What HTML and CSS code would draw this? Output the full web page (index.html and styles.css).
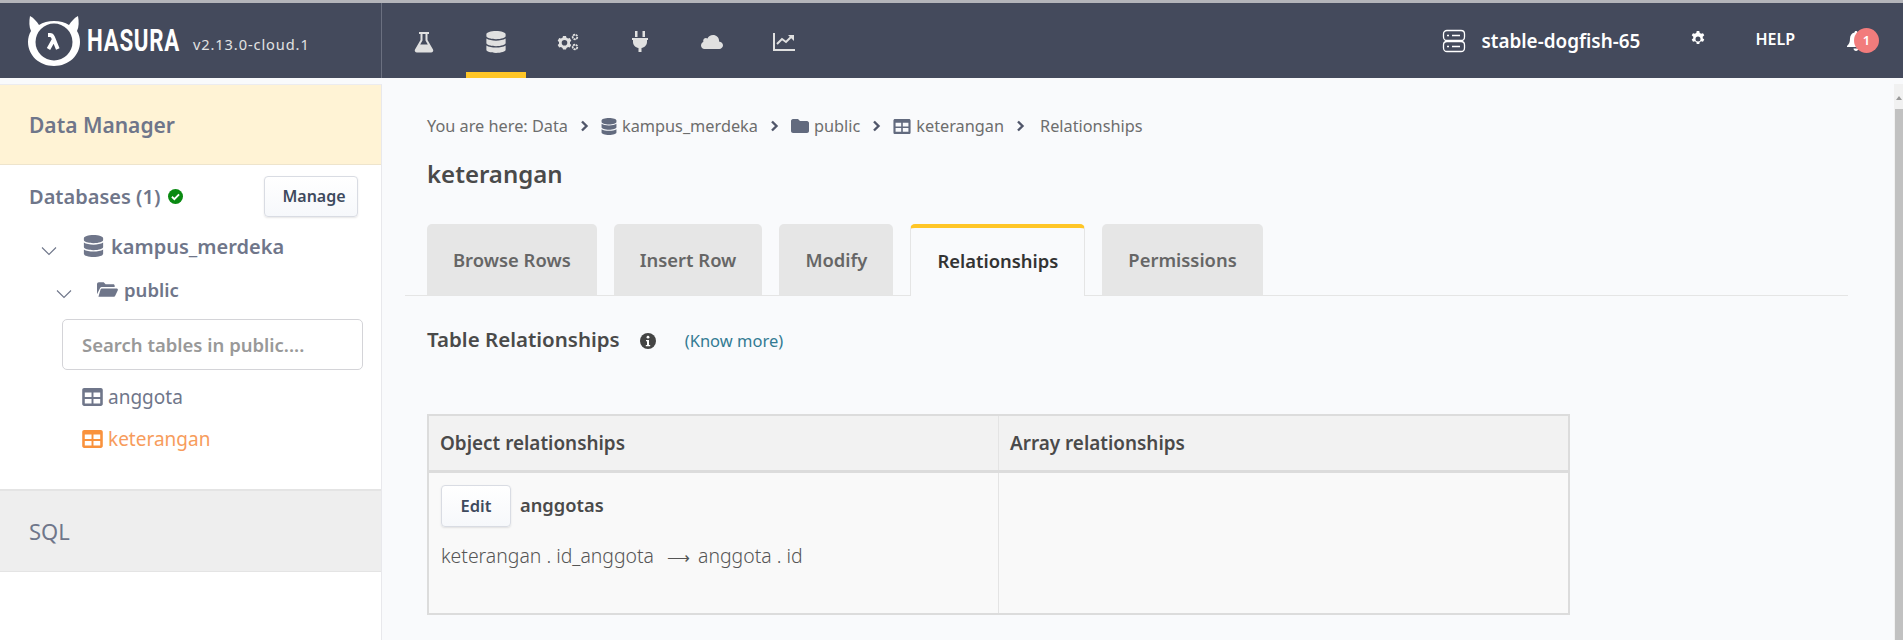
FILE: index.html
```html
<!DOCTYPE html>
<html lang="en">
<head>
    <meta charset="UTF-8">
    <meta name="viewport" content="width=device-width, initial-scale=1.0">
    <title>Hasura Console</title>
    <link rel="stylesheet" href="styles.css">
</head>
<body>
    <svg class="defs" width="0" height="0">
        <symbol id="i-db" viewBox="0 0 448 512"><path d="M448 73v46c0 40-100 73-224 73S0 159 0 119V73C0 33 100 0 224 0s224 33 224 73zm0 103v103c0 40-100 73-224 73S0 319 0 279V176c48 33 136 49 224 49s176-16 224-49zm0 160v103c0 40-100 73-224 73S0 479 0 439V336c48 33 136 49 224 49s176-16 224-49z"/></symbol>
        <symbol id="i-table" viewBox="0 0 512 448"><path fill-rule="evenodd" d="M48 0h416c27 0 48 21 48 48v352c0 27-21 48-48 48H48c-27 0-48-21-48-48V48C0 21 21 0 48 0zm16 112v112h168V112H64zm216 0v112h168V112H280zM64 272v112h168V272H64zm216 0v112h168V272H280z"/></symbol>
        <symbol id="i-chev" viewBox="0 0 10 12"><path d="M2 1.500 6.500 6 2 10.500" fill="none" stroke="currentColor" stroke-width="2.400"/></symbol>
        <symbol id="i-down" viewBox="0 0 16 10"><path d="M1 1.500 8 8.500l7-7" fill="none" stroke="currentColor" stroke-width="1.100"/></symbol>
    </svg>

    <header class="topbar">
        <div class="brand">
            <svg class="brand-logo" viewBox="0 0 52 52" width="52" height="52">
                <path d="M2 1c4 2 7 6 9 9 4-2.500 9-4 15-4s11 1.500 15 4c2-3 5-7 9-9 1 5 1 11-1 15 2 3 3 7 3 11 0 13-11 24-26 24S0 40 0 27c0-4 1-8 3-11C1 12 1 6 2 1z" fill="#fff"/>
                <circle cx="26" cy="27" r="18.500" fill="#444a5c"/>
                <path d="M20 20h2c1.500 0 2.300.7 3 2.300L29.800 34M25.500 25 20.500 34" fill="none" stroke="#fff" stroke-width="3.800"/>
            </svg>
            <span class="brand-name">HASURA</span>
            <span class="brand-version">v2.13.0-cloud.1</span>
        </div>
        <nav class="main-nav">
            <a class="nav-item">
                <svg viewBox="0 0 20 22" width="20" height="22"><path d="M5 1h10v2h-1.500v6l5.500 9.500c.8 1.500-.2 3-2 3H3c-1.800 0-2.800-1.500-2-3L6.500 9V3H5zm3.500 2v6.500L6.200 13.500h7.600L11.500 9.500V3z" fill-rule="evenodd"/></svg>
            </a>
            <a class="nav-item active">
                <svg width="20" height="22"><use href="#i-db"/></svg>
            </a>
            <a class="nav-item">
                <svg viewBox="0 0 22 20" width="22" height="20"><path fill-rule="evenodd" d="M6 4h3l.500 1.700 1.600.9 1.700-.5 1.500 2.600-1.300 1.200v1.800l1.300 1.200-1.500 2.600-1.700-.5-1.600.9L9 17.600H6l-.5-1.700-1.600-.9-1.700.5L.7 12.900 2 11.700V9.900L.7 8.700l1.500-2.600 1.700.5 1.600-.9zm1.500 4a2.800 2.800 0 1 0 0 5.600 2.800 2.800 0 0 0 0-5.600z"/><circle cx="18" cy="5" r="2.300" fill="none" stroke="currentColor" stroke-width="1.800" stroke-dasharray="2 .6"/><circle cx="18" cy="15" r="2.300" fill="none" stroke="currentColor" stroke-width="1.800" stroke-dasharray="2 .6"/></svg>
            </a>
            <a class="nav-item">
                <svg viewBox="0 0 16 22" width="16" height="22"><path d="M3 0h2.500v6H3zm7.500 0H13v6h-2.500zM0 7h16v2h-1v2c0 3-2.500 5.500-5.500 6v4h-3v-4C3.500 16.500 1 14 1 11V9H0z"/></svg>
            </a>
            <a class="nav-item">
                <svg viewBox="0 0 22 16" width="22" height="16"><path d="M18 7.500c0-.2.100-.4.100-.6C18.100 3.600 15.400 1 12 1 9.500 1 7.400 2.400 6.500 4.500 6 4.200 5.500 4 4.900 4 3.400 4 2.200 5.200 2.200 6.700c0 .4.100.8.200 1.100C1 8.500 0 10 0 11.600 0 13.500 1.600 15 3.500 15h14.800c2 0 3.700-1.700 3.700-3.700 0-1.800-1.700-3.400-4-3.800z"/></svg>
            </a>
            <a class="nav-item">
                <svg viewBox="0 0 22 18" width="22" height="18"><path d="M0 0h2v16h20v2H0z"/><path d="m4 11 5-5 4 3 5-5" fill="none" stroke="currentColor" stroke-width="2"/><path d="M15 2h6v6z"/></svg>
            </a>
        </nav>
        <div class="top-right">
            <div class="project">
                <svg class="server-icon" viewBox="0 0 24 24" width="24" height="24"><path d="M5 1.500h14c2 0 3.500 1.500 3.500 3.500v3c0 2-1.500 3.500-3.500 3.500H5C3 11.500 1.500 10 1.500 8V5c0-2 1.500-3.500 3.500-3.500zM5 12.500h14c2 0 3.500 1.500 3.500 3.500v3c0 2-1.500 3.500-3.500 3.500H5c-2 0-3.500-1.500-3.500-3.500v-3c0-2 1.500-3.500 3.500-3.500zM5 6.500h2M10 6.500h8"/><path d="M5 17.500h2M10 17.500h8"/></svg>
                <span>stable-dogfish-65</span>
            </div>
            <svg class="settings" viewBox="0 0 512 512" width="16" height="16"><path fill-rule="evenodd" d="M215 0h82l14 66c15 5 29 13 41 23l64-21 41 71-50 45c3 15 3 31 0 46l50 45-41 71-64-21c-12 10-26 18-41 23l-14 66h-82l-14-66c-15-5-29-13-41-23l-64 21-41-71 50-45c-3-15-3-31 0-46l-50-45 41-71 64 21c12-10 26-18 41-23zm41 176a80 80 0 1 0 0 160 80 80 0 0 0 0-160z"/></svg>
            <span class="help">HELP</span>
            <div class="bell">
                <svg viewBox="0 0 18 20" width="18" height="20"><path d="M9 0c1 0 1.500.7 1.500 1.500 3 .7 4.500 3.200 4.500 6 0 4 1 5.500 3 7.500v1H0v-1c2-2 3-3.500 3-7.500 0-2.800 1.500-5.300 4.500-6C7.500.7 8 0 9 0zM6.500 17.500h5C11.500 19 10.300 20 9 20s-2.500-1-2.500-2.500z"/></svg>
                <span class="bell-badge">1</span>
            </div>
        </div>
    </header>

    <div class="layout">
        <aside class="sidebar">
            <div class="side-title">Data Manager</div>
            <div class="side-body">
                <div class="db-head">
                    <span class="db-label">Databases (1)</span>
                    <svg class="ok-icon" viewBox="0 0 16 16" width="15" height="15"><circle cx="8" cy="8" r="8" fill="#0a8a12"/><path d="m4.200 8.300 2.600 2.500 5-5" fill="none" stroke="#fff" stroke-width="2"/></svg>
                    <button class="btn btn-manage">Manage</button>
                </div>
                <div class="tree-db">
                    <svg class="down" width="16" height="10"><use href="#i-down"/></svg>
                    <svg class="tree-db-icon" width="21" height="22"><use href="#i-db"/></svg>
                    <span>kampus_merdeka</span>
                </div>
                <div class="tree-schema">
                    <svg class="down" width="16" height="10"><use href="#i-down"/></svg>
                    <svg class="tree-folder" viewBox="0 0 22 15" width="21" height="15"><path d="M0 2c0-1 .8-2 2-2h5l2 2h8c1 0 1.500.7 1.500 1.500V5H5.500C4.500 5 3.500 5.500 3 6.500L0 12.500z"/><path d="M5 6.500h15.500c1 0 1.700 1 1.300 1.800l-2.600 5.400c-.3.800-1 1.300-1.900 1.300H1.500L3.800 7.300c.2-.5.700-.8 1.200-.8z"/></svg>
                    <span>public</span>
                </div>
                <input class="table-search" type="text" placeholder="Search tables in public....">
                <ul class="table-list">
                    <li><svg width="21" height="18"><use href="#i-table"/></svg>anggota</li>
                    <li class="current"><svg width="21" height="18"><use href="#i-table"/></svg>keterangan</li>
                </ul>
            </div>
            <div class="side-sql">SQL</div>
        </aside>

        <main class="content">
            <div class="crumbs">
                <span>You are here: Data</span>
                <svg class="sep" width="10" height="12"><use href="#i-chev"/></svg>
                <svg class="crumb-icon" width="16" height="17"><use href="#i-db"/></svg>
                <span>kampus_merdeka</span>
                <svg class="sep" width="10" height="12"><use href="#i-chev"/></svg>
                <svg class="crumb-icon" viewBox="0 0 18 14" width="18" height="14"><path d="M0 2c0-1 .8-2 2-2h5l2 2h7c1 0 2 1 2 2v8c0 1-1 2-2 2H2c-1 0-2-1-2-2z"/></svg>
                <span>public</span>
                <svg class="sep" width="10" height="12"><use href="#i-chev"/></svg>
                <svg class="crumb-icon" width="18" height="15"><use href="#i-table"/></svg>
                <span>keterangan</span>
                <svg class="sep sep-last" width="10" height="12"><use href="#i-chev"/></svg>
                <span>Relationships</span>
            </div>
            <h2 class="page-title">keterangan</h2>
            <div class="tabs">
                <a class="tab">Browse Rows</a>
                <a class="tab">Insert Row</a>
                <a class="tab">Modify</a>
                <a class="tab active">Relationships</a>
                <a class="tab">Permissions</a>
            </div>
            <div class="section-head">
                <h3>Table Relationships</h3>
                <svg class="info" viewBox="0 0 16 16" width="16" height="16"><circle cx="8" cy="8" r="8" fill="#444"/><circle cx="8" cy="4.200" r="1.400" fill="#fff"/><path d="M6 7h3v5h1.200v1.300H5.800V12H7V8.300H6z" fill="#fff"/></svg>
                <a class="know-more">(Know more)</a>
            </div>
            <table class="rel-table">
                <thead>
                    <tr><th>Object relationships</th><th>Array relationships</th></tr>
                </thead>
                <tbody>
                    <tr>
                        <td>
                            <div class="rel-name"><button class="btn btn-edit">Edit</button><b>anggotas</b></div>
                            <div class="rel-map">keterangan . id_anggota<span class="rel-arrow">⟶</span>anggota . id</div>
                        </td>
                        <td></td>
                    </tr>
                </tbody>
            </table>
        </main>

        <div class="scrollbar"><span class="scroll-up"></span><span class="scroll-thumb"></span></div>
    </div>
</body>
</html>
```

FILE: styles.css
```css
/* General Styles */
* {
    box-sizing: border-box;
}

html, body {
    height: 100%;
}

body {
    margin: 0;
    overflow: hidden;
    background-color: #f9fafc;
    color: #4a4a4a;
    font-family: "Noto Sans", "Open Sans", sans-serif;
    font-size: 16px;
}

.defs {
    position: absolute;
}

svg {
    fill: currentColor;
    flex: none;
}

/* Top bar */
.topbar {
    display: flex;
    height: 78px;
    background-color: #444a5c;
    border-top: 3px solid #b4b5ba;
    color: #e0e0e0;
}

.brand {
    display: flex;
    align-items: center;
    width: 382px;
    padding: 0 0 0 28px;
    border-right: 1px solid #6b7080;
}

.brand-logo {
    margin-top: 1px;
}

.brand-name {
    width: 93px;
    margin-left: 7px;
    color: #fff;
    font-family: "Roboto", sans-serif;
    font-size: 31px;
    font-weight: 700;
    letter-spacing: 1px;
    transform: scaleX(.72);
    transform-origin: left;
}

.brand-version {
    margin: 6px 0 0 13px;
    color: #e2e2e2;
    font-size: 14.600px;
    letter-spacing: .9px;
    white-space: nowrap;
}

.main-nav {
    display: flex;
    gap: 12px;
    margin-left: 12px;
}

.nav-item {
    display: flex;
    align-items: center;
    justify-content: center;
    width: 60px;
    height: 75px;
    padding-top: 9px;
    border-bottom: 6px solid transparent;
}

.nav-item.active {
    border-bottom-color: #ffc627;
}

.top-right {
    display: flex;
    align-items: center;
    margin-left: auto;
    color: #fff;
}

.project {
    display: flex;
    align-items: center;
    gap: 15px;
    font-size: 18.900px;
    font-weight: 600;
}

.server-icon {
    fill: none;
    stroke: currentColor;
    stroke-width: 1.300;
}

.settings {
    margin-left: 50px;
    margin-top: -3px;
}

.help {
    margin-left: 49px;
    margin-top: -4px;
    font-size: 16px;
    font-weight: 600;
}

.bell {
    position: relative;
    width: 54px;
    height: 20px;
    margin-left: 52px;
    margin-right: 2px;
}

.bell-badge {
    position: absolute;
    top: -3px;
    left: 7px;
    width: 25px;
    height: 25px;
    border-radius: 50%;
    background-color: #f27c7c;
    color: #fff;
    font-size: 13px;
    font-weight: 600;
    line-height: 25px;
    text-align: center;
}

/* Layout */
.layout {
    display: flex;
    height: 562px;
}

.sidebar {
    display: flex;
    flex-direction: column;
    width: 382px;
    margin-top: 6px;
    background-color: #fff;
    border-top: 1px solid #ececf0;
    border-right: 1px solid #e8e8ec;
    color: #6f768a;
}

.side-title {
    height: 80px;
    padding: 26px 0 0 29px;
    background-color: #fff3d5;
    border-bottom: 1px solid #eee4cc;
    font-size: 21px;
    font-weight: 600;
}

.side-body {
    height: 326px;
    border-bottom: 2px solid #e4e4e4;
}

.db-head {
    display: flex;
    align-items: center;
    height: 52px;
    margin-top: 8px;
    padding-left: 29px;
}

.db-label {
    margin-top: -6px;
    font-size: 20px;
    font-weight: 600;
}

.ok-icon {
    margin-left: 8px;
    margin-top: -6px;
}

.btn {
    border: 1px solid #d9dce3;
    border-radius: 4px;
    background: linear-gradient(#fff, #f6f8fb);
    box-shadow: 0 1px 2px rgba(0, 0, 0, .1);
    color: #3e4a5e;
    font-family: inherit;
    font-size: 16px;
    font-weight: 600;
}

.btn-manage {
    width: 94px;
    height: 41px;
    margin-left: auto;
    margin-right: 23px;
    margin-top: -6px;
    padding: 0 0 0 6px;
}

.tree-db {
    display: flex;
    align-items: center;
    height: 34px;
    margin-top: 4px;
    padding-left: 41px;
    font-size: 20px;
    font-weight: 600;
}

.tree-db .down {
    margin-top: 10px;
}

.tree-db-icon {
    margin-left: 26px;
    margin-right: 7px;
}

.tree-schema {
    display: flex;
    align-items: center;
    height: 30px;
    margin-top: 11px;
    padding-left: 56px;
    font-size: 18.500px;
    font-weight: 600;
}

.tree-schema .down {
    margin-top: 10px;
}

.tree-folder {
    margin-left: 25px;
    margin-right: 6px;
}

.table-search {
    display: block;
    width: 301px;
    height: 51px;
    margin: 15px 0 0 62px;
    padding: 0 19px;
    border: 1px solid #d4d4d8;
    border-radius: 5px;
    background-color: #fff;
    font-family: inherit;
    font-size: 18.500px;
    font-weight: 600;
}

.table-search::placeholder {
    color: #999;
}

.table-list {
    margin: 6px 0 0 82px;
    padding: 0;
    list-style: none;
    font-size: 19px;
}

.table-list li {
    display: flex;
    align-items: center;
    gap: 5px;
    height: 42px;
}

.table-list .current {
    color: #f79c5c;
}

.table-list .current svg {
    color: #f9923c;
}

.side-sql {
    height: 81px;
    padding: 25px 0 0 29px;
    background-color: #eee;
    border-bottom: 1px solid #e4e4e4;
    font-size: 22px;
}

/* Content */
.content {
    flex: 1;
    padding: 36px 55px 0 23px;
}

.crumbs {
    display: flex;
    align-items: center;
    height: 24px;
    padding-left: 22px;
    color: #6d6d6d;
    font-size: 16.300px;
}

.sep {
    margin: 0 11px 0 12px;
    color: #50566a;
}

.sep-last {
    margin-right: 14px;
}

.crumb-icon {
    margin-right: 5px;
    color: #626a7e;
}

.page-title {
    margin: 21px 0 0 22px;
    color: #4a4a4a;
    font-size: 24px;
    font-weight: 600;
    line-height: 30px;
}

.tabs {
    display: flex;
    gap: 17px;
    height: 72px;
    margin-top: 35px;
    padding-left: 22px;
    border-bottom: 1px solid #e5e5e5;
}

.tab {
    height: 71px;
    padding: 0 26px;
    border-radius: 5px 5px 0 0;
    background-color: #e6e6e6;
    color: #666;
    font-size: 18.400px;
    font-weight: 600;
    line-height: 71px;
}

.tab.active {
    height: 72px;
    background-color: #f9fafc;
    border: 1px solid #e5e5e5;
    border-top: 4px solid #ffc627;
    border-bottom: 0;
    color: #333;
    line-height: 65px;
}

.section-head {
    display: flex;
    align-items: center;
    height: 30px;
    margin-top: 28px;
    padding-left: 22px;
}

.section-head h3 {
    margin: 0;
    color: #4a4a4a;
    font-size: 20.500px;
    font-weight: 600;
}

.info {
    margin-left: 20px;
    margin-top: 3px;
}

.know-more {
    margin: 2px 0 0 29px;
    color: #337a93;
    font-size: 16.500px;
}

.rel-table {
    width: 1143px;
    height: 201px;
    margin: 60px 0 0 22px;
    border: 2px solid #dcdcdc;
    border-collapse: collapse;
    table-layout: fixed;
    background-color: #f9f9f9;
}

.rel-table th {
    height: 56px;
    padding: 0 11px;
    border: 1px solid #e4e4e4;
    border-bottom: 3px solid #dcdcdc;
    background-color: #f2f2f2;
    font-size: 18.900px;
    font-weight: 600;
    text-align: left;
}

.rel-table td {
    padding: 12px;
    border-left: 1px solid #e4e4e4;
    vertical-align: top;
}

.rel-name {
    display: flex;
    align-items: center;
    gap: 9px;
    font-size: 18.300px;
}

.rel-name b {
    margin-top: -3px;
    font-weight: 600;
}

.btn-edit {
    width: 70px;
    height: 42px;
    font-size: 16.500px;
}

.rel-map {
    margin-top: 15px;
    color: #555;
    font-size: 19.400px;
    font-weight: 300;
    white-space: nowrap;
}

.rel-arrow {
    margin: 0 8px 0 13px;
    font-size: 16px;
}

.scrollbar {
    position: absolute;
    top: 84px;
    right: 0;
    width: 9px;
    height: 556px;
    background-color: #f1f1f1;
}

.scroll-up {
    position: absolute;
    top: 12px;
    left: 2px;
    border-left: 3px solid transparent;
    border-right: 3px solid transparent;
    border-bottom: 4px solid #9a9a9a;
}

.scroll-thumb {
    display: block;
    height: 531px;
    margin: 25px 0 0 1px;
    background-color: #c1c1c1;
}
```
